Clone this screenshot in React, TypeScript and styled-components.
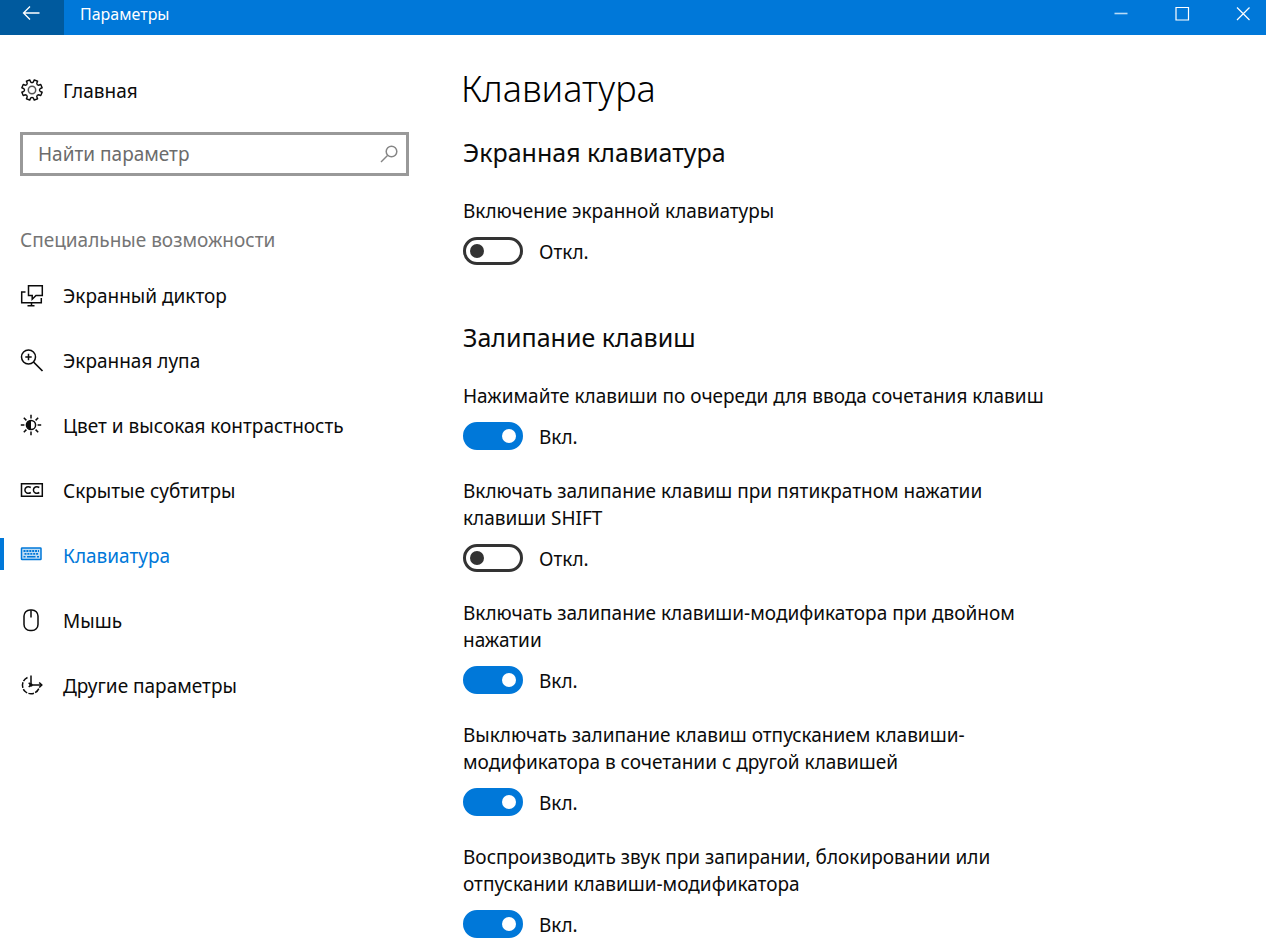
import React, { useId, useState } from "react";
import styled, { createGlobalStyle } from "styled-components";

const accent = "#0078d9";

const GlobalStyle = createGlobalStyle`
  *, *::before, *::after { box-sizing: border-box; }
  body {
    margin: 0;
    background: #fff;
    color: #0b0b0b;
    font-family: "Noto Sans", "Open Sans", sans-serif;
    font-size: 19px;
    line-height: 27px;
  }
  h1, h2, p { margin: 0; }
  button, input { font: inherit; color: inherit; }
`;

const TitleBar = styled.header`
  display: flex;
  height: 35px;
  background: ${accent};
  color: #fff;
`;

const BackButton = styled.button`
  display: flex;
  width: 64px;
  padding: 4px 0 0 22px;
  border: 0;
  background: #005a9e;
  color: #fff;
`;

const WindowTitle = styled.span`
  flex: 1;
  padding-left: 16px;
  font-size: 16px;
  line-height: 28px;
`;

const WindowControls = styled.div`
  display: flex;
  gap: 15px;
`;

const WindowButton = styled.button`
  display: flex;
  justify-content: center;
  width: 46px;
  padding: 6px 0 0;
  border: 0;
  background: transparent;
  color: #fff;
`;

const Layout = styled.div`
  display: flex;
  align-items: flex-start;
`;

const Sidebar = styled.nav`
  flex: 0 1 461px;
  padding-top: 32px;
`;

const SidebarLink = styled.a<{ $active?: boolean; $compact?: boolean }>`
  display: flex;
  align-items: center;
  gap: 19px;
  height: ${(p) => (p.$compact ? 48 : 65)}px;
  color: ${(p) => (p.$active ? accent : "inherit")};
  text-decoration: none;
  white-space: nowrap;
  &::before {
    content: "";
    width: 4px;
    height: 32px;
    margin: 0 -3px 6px 0;
    background: ${(p) => (p.$active ? accent : "transparent")};
  }
  svg { flex: none; margin-bottom: 2px; }
`;

const SearchBox = styled.form`
  display: flex;
  align-items: center;
  height: 44px;
  margin: 17px 52px 0 20px;
  padding-right: 8px;
  border: 3px solid #999;
`;

const SearchInput = styled.input`
  flex: 1;
  min-width: 0;
  padding: 0 0 0 15px;
  border: 0;
  outline: 0;
  background: transparent;
  &::placeholder { color: #6c6c6c; opacity: 1; }
`;

const SearchButton = styled.button`
  display: flex;
  padding: 0;
  border: 0;
  background: transparent;
  color: #858585;
`;

const GroupTitle = styled.p`
  margin: 51px 0 10px;
  padding-left: 20px;
  color: #757575;
`;

const Main = styled.main`
  flex: 1 1 0;
  padding: 28px 20px 0 0;
`;

const PageTitle = styled.h1`
  color: #000;
  font-size: 36px;
  font-weight: 300;
  line-height: 52px;
  margin-bottom: 19px;
`;

const Section = styled.section`
  max-width: 602px;
  padding-left: 2px;
  & + & { margin-top: 54px; }
`;

const SectionTitle = styled.h2`
  margin-bottom: 28px;
  font-size: 25px;
  font-weight: 400;
  line-height: 36px;
`;

const Setting = styled.div`
  & + & { margin-top: 28px; }
`;

const SettingLabel = styled.label`
  display: block;
  margin-bottom: 12px;
`;

const ToggleRow = styled.div`
  display: flex;
  align-items: center;
  gap: 16px;
  height: 28px;
`;

const Switch = styled.input`
  appearance: none;
  display: flex;
  align-items: center;
  width: 60px;
  height: 28px;
  margin: 0;
  padding: 0 4px;
  border: 3px solid #333;
  border-radius: 14px;
  background: #fff;
  &::before {
    content: "";
    width: 14px;
    height: 14px;
    border-radius: 50%;
    background: #333;
  }
  &:checked {
    justify-content: flex-end;
    border-color: ${accent};
    background: ${accent};
  }
  &:checked::before { background: #fff; }
`;

const StateText = styled.span`
  padding-top: 2px;
`;

const Icon = ({ children, size = 24 }: { children: React.ReactNode; size?: number }) => (
  <svg width={size} height={size} viewBox={`0 0 ${size} ${size}`} fill="none" stroke="currentColor" strokeWidth="1.5" aria-hidden="true">
    {children}
  </svg>
);

const gearPath = (() => {
  const points: string[] = [];
  for (let i = 0; i < 8; i++) {
    const at = (deg: number, r: number) => {
      const a = ((i * 45 + 22.5 + deg) * Math.PI) / 180;
      return `${(12 + r * Math.cos(a)).toFixed(2)} ${(12 + r * Math.sin(a)).toFixed(2)}`;
    };
    points.push(`${i ? "L" : "M"}${at(-10, 10.4)}L${at(10, 10.4)}L${at(13, 8.2)}Q${at(22.5, 6.8)} ${at(32, 8.2)}`);
  }
  return points.join("") + "Z";
})();

const GearIcon = () => (
  <Icon><path d={gearPath} strokeWidth="1.4" strokeLinejoin="round" /><circle cx="12" cy="12" r="3.7" stroke="#555" /></Icon>
);
const NarratorIcon = () => (
  <Icon>
    <path d="M5.5 8H1.7v10.7h19.6V14M11.5 19v2.5M7.5 21.7h7" />
    <path d="M8.5 1.7h13.8v9.8h-6.3l-3.8 3.8v-3.8H8.5z" />
  </Icon>
);
const MagnifierIcon = () => (
  <Icon><circle cx="8.5" cy="8" r="7" /><path d="M13.5 13L22.5 22" strokeWidth="1.7" /><path d="M8.5 4.8v6.400M5.300 8h6.400" /></Icon>
);
const ContrastIcon = () => (
  <Icon>
    <circle cx="11" cy="11" r="4.6" />
    <path d="M11 6.4a4.6 4.6 0 0 0 0 9.2z" fill="currentColor" stroke="none" />
    <path d="M11 .8v3.6M11 17.600v3.600M.8 11h3.600M17.600 11h3.600M3.800 3.800l2.600 2.600M15.600 15.600l2.600 2.600M3.800 18.200l2.600-2.600M15.600 6.400l2.600-2.600" />
  </Icon>
);
const CaptionsIcon = () => (
  <Icon>
    <path d="M1.5 4.700h20.800v12.600H1.500z" />
    <path d="M10.800 8.500C8 6.700 4.900 8.100 4.900 11s3.100 4.300 5.900 2.500M19.300 8.500c-2.800-1.800-5.900-.4-5.900 2.500s3.100 4.300 5.900 2.500" />
  </Icon>
);
const KeyboardIcon = () => (
  <Icon>
    <rect x="1.500" y="4" width="19.500" height="11.500" rx=".6" fill="currentColor" fillOpacity=".25" />
    <path d="M3.500 7h15.500M4.500 9.800h14" strokeWidth="1.800" strokeDasharray="2 .9" />
    <path d="M3.500 12.700h2M7 12.700h8.500M17 12.700h2" strokeWidth="1.600" />
  </Icon>
);
const MouseIcon = () => (
  <Icon><rect x="4" y=".9" width="14" height="20.600" rx="6" /><path d="M11 1.200v7.400" /></Icon>
);
const OtherIcon = () => (
  <Icon>
    <path d="M7.500 3.500A8.500 8.500 0 1 0 19 14" strokeDasharray="5.500 1.300" />
    <path d="M11 1.500V11h10.500" />
    <path d="M8.700 8.700L11 11l-2.300 2M19.200 8.500l2.600 2.500-2.600 2.500" />
    <circle cx="11" cy="11" r="1.700" fill="currentColor" stroke="none" />
  </Icon>
);

const navItems = [
  { label: "Экранный диктор", icon: <NarratorIcon /> },
  { label: "Экранная лупа", icon: <MagnifierIcon /> },
  { label: "Цвет и высокая контрастность", icon: <ContrastIcon /> },
  { label: "Скрытые субтитры", icon: <CaptionsIcon /> },
  { label: "Клавиатура", icon: <KeyboardIcon />, active: true },
  { label: "Мышь", icon: <MouseIcon /> },
  { label: "Другие параметры", icon: <OtherIcon /> },
];

function ToggleSetting({ label, initial }: { label: string; initial: boolean }) {
  const [on, setOn] = useState(initial);
  const id = useId();
  return (
    <Setting>
      <SettingLabel htmlFor={id}>{label}</SettingLabel>
      <ToggleRow>
        <Switch id={id} type="checkbox" role="switch" checked={on} onChange={(e) => setOn(e.target.checked)} />
        <StateText>{on ? "Вкл." : "Откл."}</StateText>
      </ToggleRow>
    </Setting>
  );
}

export default function App() {
  return (
    <>
      <GlobalStyle />
      <TitleBar>
        <BackButton aria-label="Назад">
          <Icon size={18}><path d="M17.5 9H1.5M8 2.5L1.5 9 8 15.5" strokeWidth="1.3" /></Icon>
        </BackButton>
        <WindowTitle>Параметры</WindowTitle>
        <WindowControls>
          <WindowButton aria-label="Свернуть">
            <Icon size={16}><path d="M1.5 7.5h13" strokeWidth="1.6" stroke="#b9dcf7" /></Icon>
          </WindowButton>
          <WindowButton aria-label="Развернуть">
            <Icon size={16}><path d="M2 1.5h12.5v12.5H2z" strokeWidth="1.2" /></Icon>
          </WindowButton>
          <WindowButton aria-label="Закрыть">
            <Icon size={16}><path d="M2 1.5l12.5 12.5M14.5 1.5L2 14" strokeWidth="1.2" /></Icon>
          </WindowButton>
        </WindowControls>
      </TitleBar>
      <Layout>
        <Sidebar>
          <SidebarLink href="#home" $compact><GearIcon />Главная</SidebarLink>
          <SearchBox role="search" onSubmit={(e) => e.preventDefault()}>
            <SearchInput type="text" aria-label="Найти параметр" placeholder="Найти параметр" />
            <SearchButton aria-label="Найти">
              <Icon size={18}><circle cx="11.5" cy="6.5" r="5.3" /><path d="M7.5 10.5L1 17" /></Icon>
            </SearchButton>
          </SearchBox>
          <GroupTitle>Специальные возможности</GroupTitle>
          {navItems.map((item) => (
            <SidebarLink key={item.label} href="#" $active={item.active}>{item.icon}{item.label}</SidebarLink>
          ))}
        </Sidebar>
        <Main>
          <PageTitle>Клавиатура</PageTitle>
          <Section>
            <SectionTitle>Экранная клавиатура</SectionTitle>
            <ToggleSetting label="Включение экранной клавиатуры" initial={false} />
          </Section>
          <Section>
            <SectionTitle>Залипание клавиш</SectionTitle>
            <ToggleSetting label="Нажимайте клавиши по очереди для ввода сочетания клавиш" initial />
            <ToggleSetting label="Включать залипание клавиш при пятикратном нажатии клавиши SHIFT" initial={false} />
            <ToggleSetting label="Включать залипание клавиши-модификатора при двойном нажатии" initial />
            <ToggleSetting label="Выключать залипание клавиш отпусканием клавиши-модификатора в сочетании с другой клавишей" initial />
            <ToggleSetting label="Воспроизводить звук при запирании, блокировании или отпускании клавиши-модификатора" initial />
          </Section>
        </Main>
      </Layout>
    </>
  );
}
